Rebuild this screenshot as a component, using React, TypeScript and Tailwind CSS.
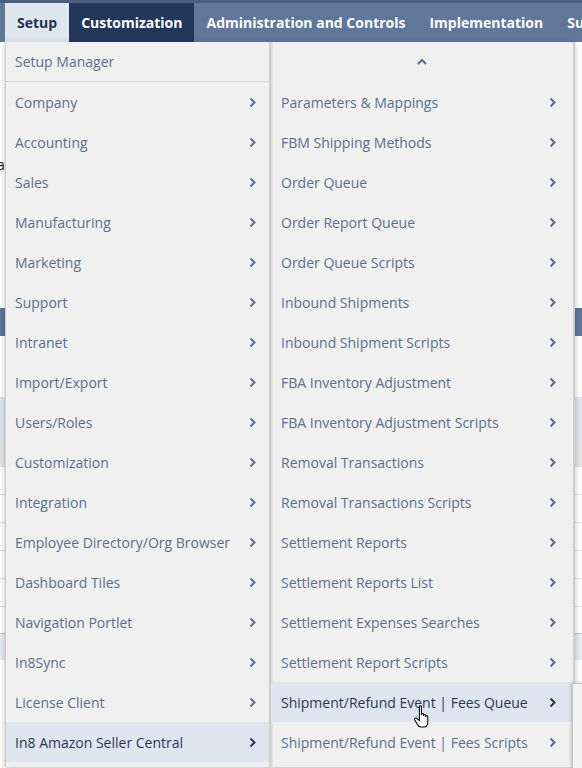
import React from "react";

const leftItems = [
  "Company",
  "Accounting",
  "Sales",
  "Manufacturing",
  "Marketing",
  "Support",
  "Intranet",
  "Import/Export",
  "Users/Roles",
  "Customization",
  "Integration",
  "Employee Directory/Org Browser",
  "Dashboard Tiles",
  "Navigation Portlet",
  "In8Sync",
  "License Client",
  "In8 Amazon Seller Central",
];

const rightItems = [
  "Parameters & Mappings",
  "FBM Shipping Methods",
  "Order Queue",
  "Order Report Queue",
  "Order Queue Scripts",
  "Inbound Shipments",
  "Inbound Shipment Scripts",
  "FBA Inventory Adjustment",
  "FBA Inventory Adjustment Scripts",
  "Removal Transactions",
  "Removal Transactions Scripts",
  "Settlement Reports",
  "Settlement Reports List",
  "Settlement Expenses Searches",
  "Settlement Report Scripts",
  "Shipment/Refund Event | Fees Queue",
  "Shipment/Refund Event | Fees Scripts",
];

function Chevron({ dark }: { dark?: boolean }) {
  return (
    <svg width="7" height="11" viewBox="0 0 7 11" className={dark ? "text-[#2a3855]" : "text-[#5a6e92]"}>
      <path d="M1.5 1.5 L5.5 5.5 L1.5 9.5" fill="none" stroke="currentColor" strokeWidth="2" />
    </svg>
  );
}

function Row({ label, active, pad }: { label: string; active?: boolean; pad: string }) {
  return (
    <div
      className={`flex h-10 items-center justify-between ${pad} ${
        active ? "bg-[#dfe5ee] text-[#2a3855]" : "text-[#5a6e92]"
      }`}
    >
      <span className="whitespace-nowrap">{label}</span>
      <Chevron dark={active} />
    </div>
  );
}

export default function App() {
  const tabs = [
    { label: "Setup", cls: "bg-[#dfe6ef] text-[#1f3252]" },
    { label: "Customization", cls: "bg-[#22375a] text-white" },
    { label: "Administration and Controls", cls: "text-white" },
    { label: "Implementation", cls: "text-white" },
    { label: "Support", cls: "text-white" },
  ];

  return (
    <div className="relative h-[768px] w-[582px] overflow-hidden bg-white font-['Open_Sans',sans-serif] text-[14px]">
      <nav className="flex h-[42px] border-t-[3px] border-[#4b5f80] bg-[#607799] pl-[5px]">
        {tabs.map((t) => (
          <div key={t.label} className={`flex shrink-0 items-center px-3 font-bold whitespace-nowrap ${t.cls}`}>
            {t.label}
          </div>
        ))}
      </nav>

      {/* page behind the menu */}
      <div className="flex flex-col">
        <div className="h-[116px]" />
        <div className="h-[150px] text-[14px] leading-[14px] text-[#222]">
          <span className="-ml-[3px]">a</span>
        </div>
        <div className="h-[28px] bg-[#5f7599]" />
        <div className="h-[61px]" />
        <div className="h-[42px] bg-[#dfe5ef]" />
        <div className="h-[28px] bg-[#e4e4e4]" />
        <div className="h-[28px] border-b border-[#e2e2e2]" />
        <div className="h-[28px] border-b border-[#e2e2e2]" />
        <div className="h-[28px] border-b border-[#e2e2e2]" />
        <div className="h-[28px] border-b border-[#e2e2e2]" />
        <div className="h-[28px] border-b border-[#e2e2e2]" />
        <div className="h-[27px] border-b border-[#b9c2d0]" />
        <div className="h-[26px] bg-[#e8ecf3]" />
      </div>

      {/* dropdown */}
      <div className="absolute top-[42px] left-[5px] flex bg-[#f0f0f0] shadow-[0_2px_6px_rgba(0,0,0,0.25)]">
        <div className="w-[266px] border-r-2 border-l border-[#cdcdcd]">
          <div className="flex h-10 items-center border-b border-[#cfd4dc] pl-[9px] text-[#5a6e92]">
            Setup Manager
          </div>
          {leftItems.map((l) => (
            <Row key={l} label={l} pad="pl-[9px] pr-[13px]" active={l === "In8 Amazon Seller Central"} />
          ))}
          <div className="h-[5px]" />
        </div>
        <div className="w-[304px] border-r-2 border-[#cdcdcd] shadow-[inset_3px_0_3px_-2px_rgba(0,0,0,0.12)]">
          <div className="flex h-10 items-center justify-center text-[#5a6e92]">
            <svg width="12" height="8" viewBox="0 0 12 8">
              <path d="M2 6 L6 2 L10 6" fill="none" stroke="currentColor" strokeWidth="2" />
            </svg>
          </div>
          {rightItems.map((r) => (
            <Row key={r} label={r} pad="pl-[10px] pr-[17px]" active={r === "Shipment/Refund Event | Fees Queue"} />
          ))}
        </div>
      </div>

      {/* next submenu peeking in */}
      <div className="absolute top-[683px] left-[572px] h-[90px] w-[20px] border-t border-l border-[#c4c4c4] bg-[#f4f4f4] shadow-[-1px_0_3px_rgba(0,0,0,0.2)]" />

      {/* pointer cursor */}
      <svg className="absolute top-[705px] left-[413px]" width="18" height="23" viewBox="0 0 16 22">
        <path
          d="M5.5 1.5 C5.5 0.5 7.5 0.5 7.5 1.5 V9 C7.5 8 9.5 8 9.5 9 V10 C9.5 9 11.5 9 11.5 10 V11 C11.5 10 13.5 10 13.5 11 V16 C13.5 19 12 21 10 21 H7 C5.5 21 4.5 20 3.5 18.5 L1 14 C0.5 13 1.5 12 2.5 12.5 L5.5 15 Z"
          fill="white"
          stroke="black"
          strokeWidth="1"
          strokeLinejoin="round"
        />
      </svg>
    </div>
  );
}
